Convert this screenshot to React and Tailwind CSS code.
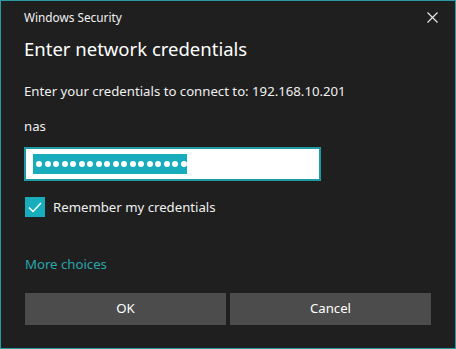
import React from "react";

export default function App() {
  const font = { fontFamily: '"Noto Sans", "Open Sans", sans-serif' };
  return (
    <div
      style={font}
      className="w-[456px] h-[349px] bg-[#1f1f1f] border border-[#2a9ca1] flex flex-col text-white overflow-hidden"
    >
      <div className="flex items-center justify-between h-[32px] pl-[23px] pr-[16px]">
        <span className="text-[11.8px] leading-[16px] text-[#f2f2f2]">Windows Security</span>
        <svg width="11" height="11" viewBox="0 0 11 11" className="mr-[1px]">
          <path d="M0.5 0.5 L10.5 10.5 M10.5 0.5 L0.5 10.5" stroke="#e6e6e6" strokeWidth="1.2" fill="none" />
        </svg>
      </div>
      <div className="pl-[23px] pr-[24px] flex flex-col">
        <h1 className="text-[18.5px] leading-[28px] mt-[2px] text-white">Enter network credentials</h1>
        <p className="text-[13.2px] leading-[20px] mt-[18px] text-[#f0f0f0]">
          Enter your credentials to connect to: 192.168.10.201
        </p>
        <p className="text-[13.2px] leading-[20px] mt-[15px] text-[#f0f0f0]">nas</p>
        <div className="mt-[11px] w-[297px] h-[34px] bg-white border-2 border-[#1d9aa3] flex items-center pl-[7px]">
          <div className="h-[20px] w-[154px] bg-[#17adbd] flex items-center gap-[2.5px] pl-[3px]">
            {Array.from({ length: 18 }).map((_, i) => (
              <span key={i} className="w-[6px] h-[6px] rounded-full bg-white" />
            ))}
          </div>
        </div>
        <div className="mt-[16px] flex items-center gap-[8px] pl-[1px]">
          <div className="w-[20px] h-[20px] bg-[#17adbd] flex items-center justify-center">
            <svg width="14" height="11" viewBox="0 0 14 11">
              <path d="M1 5.5 L5 9.5 L13 1" stroke="white" strokeWidth="1.5" fill="none" />
            </svg>
          </div>
          <span className="text-[13.2px] leading-[20px] text-[#f0f0f0]">Remember my credentials</span>
        </div>
        <span className="mt-[37px] pl-[1px] text-[13.2px] leading-[20px] text-[#2aa6ad]">More choices</span>
        <div className="mt-[19px] flex gap-[4px] pl-[1px]">
          <button className="w-[201px] h-[32px] bg-[#4c4c4c] text-[13.2px] text-white">OK</button>
          <button className="w-[201px] h-[32px] bg-[#4c4c4c] text-[13.2px] text-white">Cancel</button>
        </div>
      </div>
    </div>
  );
}
